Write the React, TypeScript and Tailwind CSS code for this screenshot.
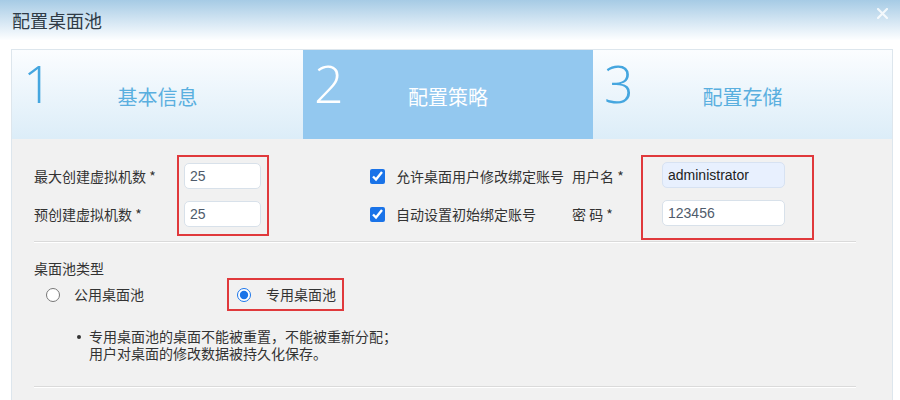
import React from "react";

const CJK = '"Noto Sans CJK SC", "Liberation Sans", sans-serif';

function Tab({ n, label, active }: { n: string; label: string; active?: boolean }) {
  return (
    <div
      className={
        "relative h-[89px] " +
        (active ? "bg-[#93c8ef]" : "bg-gradient-to-b from-[#fbfdff] to-[#dcedf8]")
      }
    >
      <div
        className={
          "absolute left-[11px] top-[3px] text-[52px] leading-[60px] font-light " +
          (active ? "text-white" : "text-[#45a6df]")
        }
        style={{ fontFamily: '"Open Sans", "Liberation Sans", sans-serif' }}
      >
        {n}
      </div>
      <div
        className={
          "absolute left-0 right-0 top-[33px] text-center text-[20px] leading-[28px] " +
          (active ? "text-white" : "text-[#5aafdf]")
        }
      >
        {label}
      </div>
    </div>
  );
}

function Input({ value, auto }: { value: string; auto?: boolean }) {
  return (
    <div
      className={
        "h-[26px] rounded-[5px] border flex items-center px-[5px] text-[14px] " +
        (auto
          ? "bg-[#e8f0fe] border-[#d7e2f2] text-[#222]"
          : "bg-white border-[#d8e1ea] text-[#4f5b6b]")
      }
      style={{ fontFamily: '"Liberation Sans", Arial, sans-serif' }}
    >
      {value}
    </div>
  );
}

function Check({ label }: { label: string }) {
  return (
    <div className="h-[26px] flex items-center">
      <input
        type="checkbox"
        defaultChecked
        className="w-[15px] h-[15px] m-0 accent-[#1a73e8]"
      />
      <span className="ml-[11px] text-[14px] text-[#333]">{label}</span>
    </div>
  );
}

export default function App() {
  return (
    <div className="w-[900px] h-[400px] overflow-hidden bg-white relative" style={{ fontFamily: CJK }}>
      {/* header */}
      <div className="h-[40px] bg-gradient-to-b from-[#a6cbe5] to-[#fdfeff] flex items-center pl-[12px]">
        <span className="text-[18px] text-[#2f3b46] leading-none">配置桌面池</span>
      </div>
      <svg className="absolute left-[877px] top-[8px]" width="11" height="11" viewBox="0 0 11 11">
        <path d="M1 1L10 10M10 1L1 10" stroke="rgba(255,255,255,0.8)" strokeWidth="2.2" strokeLinecap="round" />
      </svg>

      <div className="mt-[9px] ml-[11px] w-[882px] border-l border-r border-t border-[#dde6ed] h-[360px] flex flex-col">
        <div className="grid grid-cols-[291px_290px_1fr]">
          <Tab n="1" label="基本信息" />
          <Tab n="2" label="配置策略" active />
          <Tab n="3" label="配置存储" />
        </div>

        <div className="flex-1 bg-[#f1f1f1] pl-[22px] pr-[36px]">
          {/* top section */}
          <div className="flex pt-[16px]">
            <div className="w-[143px] pt-[8px] flex flex-col gap-[12px]">
              <div className="h-[26px] flex items-center text-[14px] text-[#333]">最大创建虚拟机数 *</div>
              <div className="h-[26px] flex items-center text-[14px] text-[#333]">预创建虚拟机数 *</div>
            </div>
            <div className="w-[92px] h-[81px] border-2 border-[#e0393c] pl-[5px] pr-[6px] pt-[6px] flex flex-col gap-[12px]">
              <Input value="25" />
              <Input value="25" />
            </div>
            <div className="ml-[101px] w-[202px] pt-[8px] flex flex-col gap-[12px]">
              <Check label="允许桌面用户修改绑定账号" />
              <Check label="自动设置初始绑定账号" />
            </div>
            <div className="w-[69px] pt-[8px] flex flex-col gap-[12px] text-[14px] text-[#333]">
              <div className="h-[26px] flex items-center">用户名 *</div>
              <div className="h-[26px] flex items-center">密&nbsp;码 *</div>
            </div>
            <div className="w-[173px] h-[85px] border-2 border-[#e0393c] pl-[19px] pr-[27px] pt-[5px] flex flex-col gap-[12px]">
              <Input value="administrator" auto />
              <Input value="123456" />
            </div>
          </div>

          <div className="mt-[1px] h-[2px] border-t border-[#dadada] border-b border-b-white" />

          <div className="mt-[16px] text-[14px] leading-[18px] text-[#333]">桌面池类型</div>

          <div className="flex items-center mt-[1px]">
            <div className="flex items-center pl-[12px] w-[193px]">
              <input type="radio" name="pool" className="w-[14px] h-[14px] m-0" />
              <span className="ml-[14px] text-[14px] text-[#333]">公用桌面池</span>
            </div>
            <div className="w-[117px] h-[33px] border-2 border-[#e0393c] flex items-center pl-[8px]">
              <input type="radio" name="pool" defaultChecked className="w-[14px] h-[14px] m-0 accent-[#1a73e8]" />
              <span className="ml-[15px] text-[14px] text-[#333]">专用桌面池</span>
            </div>
          </div>

          <div className="mt-[17px] pl-[43px] flex text-[14px] leading-[17px] text-[#333]">
            <div className="w-[12px] flex justify-start pt-[7px]">
              <div className="w-[4px] h-[4px] rounded-full bg-[#333]" />
            </div>
            <p className="m-0">
              专用桌面池的桌面不能被重置，不能被重新分配；
              <br />
              用户对桌面的修改数据被持久化保存。
            </p>
          </div>

          <div className="mt-[24px] h-[2px] border-t border-[#dadada] border-b border-b-white" />
        </div>
      </div>
    </div>
  );
}
